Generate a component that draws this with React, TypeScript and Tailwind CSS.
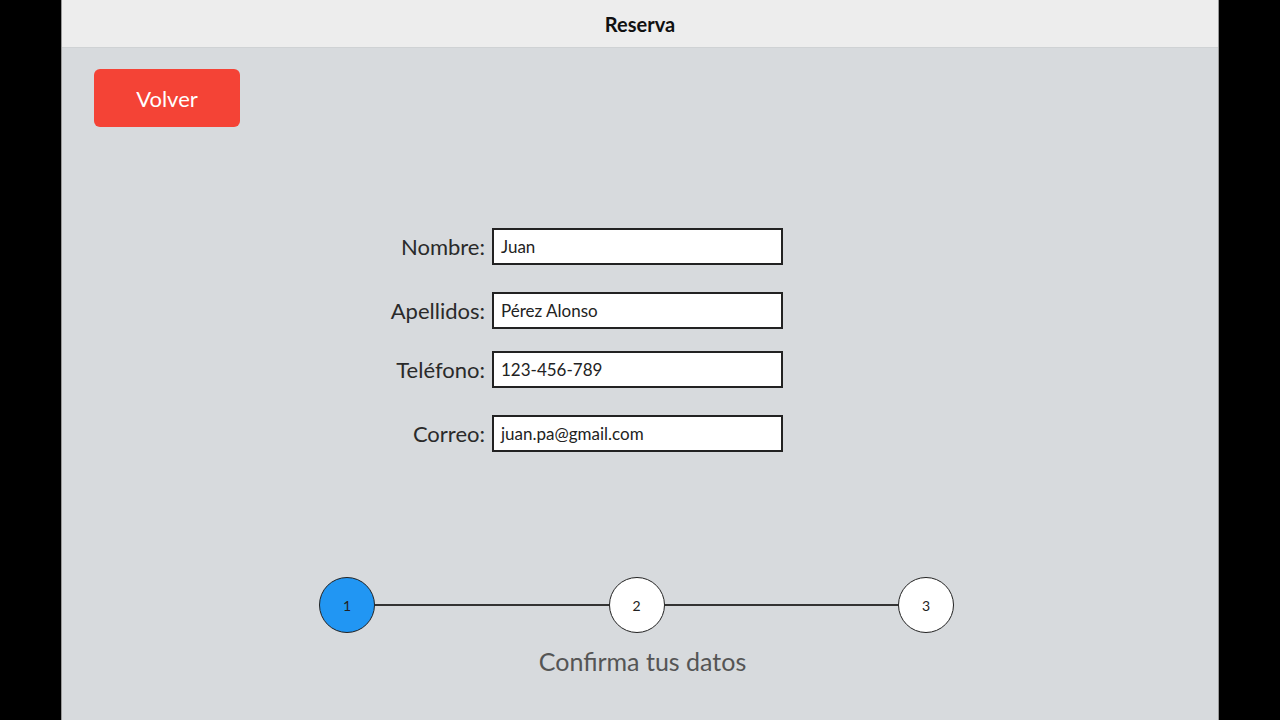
import React from "react";

const font = { fontFamily: '"Source Sans Pro", Lato, "Noto Sans", sans-serif' };

function Row({ label, value, mt }: { label: string; value: string; mt: string }) {
  return (
    <div className={`flex items-center ${mt}`}>
      <div className="w-[130px] text-right text-[22px] text-[#2a2a2a] pr-[7px] leading-none">{label}</div>
      <div className="w-[291px] h-[37px] border-2 border-[#222] bg-white flex items-center px-[7px] text-[17px] text-[#222]">
        {value}
      </div>
    </div>
  );
}

export default function App() {
  return (
    <div className="w-full h-[720px] bg-black flex overflow-hidden" style={font}>
      <div className="w-[61px] shrink-0" />
      <div className="w-[1158px] shrink-0 h-full bg-[#d7dadd] border-x border-[#9a9a9a] flex flex-col">
        <div className="h-[48px] bg-[#ededed] border-b border-[#cfd2d4] flex items-center justify-center text-[20px] font-bold text-[#111]">
          Reserva
        </div>
        <div className="pl-[32px] pt-[21px]">
          <button className="w-[146px] h-[58px] rounded-[6px] bg-[#f44336] text-white text-[22px]">Volver</button>
        </div>
        <div className="ml-[300px] mt-[101px] flex flex-col">
          <Row label="Nombre:" value="Juan" mt="mt-0" />
          <Row label="Apellidos:" value="Pérez Alonso" mt="mt-[27px]" />
          <Row label="Teléfono:" value="123-456-789" mt="mt-[22px]" />
          <Row label="Correo:" value="juan.pa@gmail.com" mt="mt-[27px]" />
        </div>
        <div className="ml-[257px] mt-[125px] w-[635px] flex flex-col">
          <div className="flex items-center">
            <div className="w-[56px] h-[56px] rounded-full bg-[#2196f3] border-[1.5px] border-[#222] flex items-center justify-center text-[14px] text-[#222]">1</div>
            <div className="flex-1 h-[2px] bg-[#333]" />
            <div className="w-[56px] h-[56px] rounded-full bg-white border-[1.5px] border-[#222] flex items-center justify-center text-[14px] text-[#222]">2</div>
            <div className="flex-1 h-[2px] bg-[#333]" />
            <div className="w-[56px] h-[56px] rounded-full bg-white border-[1.5px] border-[#222] flex items-center justify-center text-[14px] text-[#222]">3</div>
          </div>
          <div className="mt-[16px] text-center text-[25px] text-[#555] leading-none pl-[12px]">Confirma tus datos</div>
        </div>
      </div>
      <div className="flex-1" />
    </div>
  );
}
